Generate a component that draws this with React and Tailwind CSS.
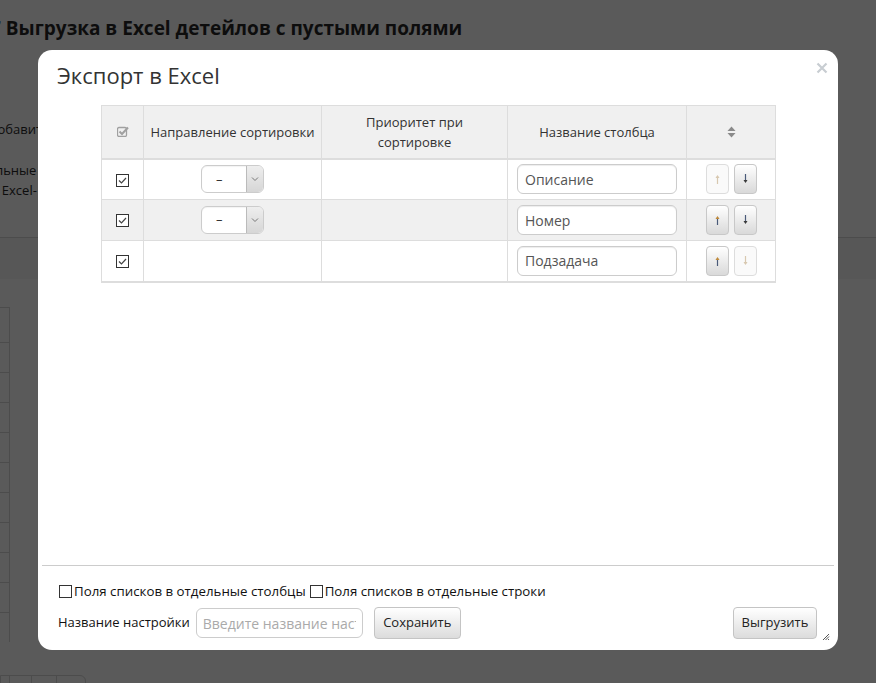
import React from 'react';

const font = { fontFamily: '"Open Sans", "DejaVu Sans", sans-serif' };

const rows = [
  { name: 'Описание', select: true, upOff: true, downOff: false },
  { name: 'Номер', select: true, upOff: false, downOff: false, striped: true },
  { name: 'Подзадача', select: false, upOff: false, downOff: true },
];

function Check({ checked }) {
  return (
    <span className="inline-flex w-[13px] h-[13px] border border-[#333] bg-white items-center justify-center align-middle">
      {checked && (
        <svg width="11" height="11" viewBox="0 0 11 11">
          <path d="M2 5.5 L4.5 8 L9 3" fill="none" stroke="#444" strokeWidth="1.2" />
        </svg>
      )}
    </span>
  );
}

function ArrowBtn({ dir, off }) {
  return (
    <button
      className={`w-[23px] h-[30px] rounded-[4px] border flex items-center justify-center ${
        off ? 'border-[#ddd] bg-[#fafafa]' : 'border-[#c8c8c8] bg-gradient-to-b from-white to-[#d9d9d9]'
      }`}
    >
      <svg width="7" height="12" viewBox="0 0 7 12">
        {dir === 'up' ? (
          <>
            <path d="M3.5 3 V11" stroke={off ? '#d8c8b0' : '#4a5a78'} strokeWidth="1.2" />
            <path d="M1.5 5 L3.5 2 L5.5 5" fill={off ? '#d8c8b0' : '#c08a3a'} />
          </>
        ) : (
          <>
            <path d="M3.5 1 V9" stroke={off ? '#d8c8b0' : '#4a5a78'} strokeWidth="1.2" />
            <path d="M1.5 7 L3.5 10 L5.5 7" fill={off ? '#d8c8b0' : '#3a3a3a'} />
          </>
        )}
      </svg>
    </button>
  );
}

function SelectBox() {
  return (
    <div className="mx-auto w-[63px] h-[28px] rounded-[6px] border border-[#ccc] bg-white flex overflow-hidden shadow-[inset_0_1px_1px_rgba(0,0,0,0.05)]">
      <div className="flex-1 flex items-center pl-[14px] text-[13px] text-[#333]">–</div>
      <div className="w-[17px] border-l border-[#bbb] bg-gradient-to-b from-[#eee] to-[#d6d6d6] flex items-center justify-center">
        <svg width="8" height="6" viewBox="0 0 8 6">
          <path d="M1 1.5 L4 4.5 L7 1.5" fill="none" stroke="#777" strokeWidth="1" />
        </svg>
      </div>
    </div>
  );
}

export default function App() {
  return (
    <div className="relative w-[876px] h-[683px] overflow-hidden bg-[#5a5a5a] text-[#0d0d0d]" style={font}>
      {/* page behind the overlay */}
      <div className="pt-[15px] -ml-[10px] text-[19px] font-bold leading-[26px] whitespace-nowrap">
        7 Выгрузка в Excel детейлов с пустыми полями
      </div>
      <div className="mt-[79px] -ml-[10px] text-[13px] leading-[18px]">добавить</div>
      <div className="mt-[22px] -ml-[33px] text-[13px] leading-[20px]">отдельные</div>
      <div className="-ml-[9px] text-[13px] leading-[20px]">в Excel-</div>
      <div className="mt-[37px] border-t border-[#4c4c4c] h-[42px] bg-[#575757]" />
      <div className="mt-[28px] w-[10px] border-r border-[#4c4c4c]">
        <div className="h-[35px] border-t border-[#4c4c4c]" />
        {Array.from({ length: 10 }).map((_, i) => (
          <div key={i} className="h-[30px] border-t border-[#4c4c4c]" />
        ))}
      </div>
      <div className="mt-[33px] flex w-[86px] h-[20px] border border-[#4c4c4c] rounded-tr-[6px]">
        <div className="w-[9px] border-r border-[#4c4c4c]" />
        <div className="w-[22px] border-r border-[#4c4c4c]" />
        <div className="w-[25px] border-r border-[#4c4c4c]" />
      </div>

      {/* modal */}
      <div className="absolute left-[38px] top-[50px] w-[800px] h-[600px] bg-white rounded-[14px] flex flex-col text-[#333]">
        <div className="relative px-[19px] pt-[11px] h-[55px]">
          <div className="text-[22px] leading-[28px] text-[#333]">Экспорт в Excel</div>
          <svg className="absolute right-[10px] top-[12px]" width="12" height="12" viewBox="0 0 12 12">
            <path d="M1.5 1.5 L10.5 10.5 M10.5 1.5 L1.5 10.5" stroke="#c8cdd2" strokeWidth="2.2" />
          </svg>
        </div>

        <div className="flex-1 px-[63px]">
          <table className="w-[675px] border-collapse text-[13px] text-[#333]">
            <thead>
              <tr className="bg-[#f0f0f0] h-[53px]">
                <th className="w-[42px] border border-[#ddd] border-b-2 font-normal">
                  <svg className="mx-auto" width="12" height="11" viewBox="0 0 12 11">
                    <rect x="0.5" y="1.5" width="9" height="9" rx="1.5" fill="none" stroke="#a0a0a0" strokeWidth="1.3" />
                    <path d="M2.5 5.5 L5 8 L11 1.5" fill="none" stroke="#a0a0a0" strokeWidth="2" />
                  </svg>
                </th>
                <th className="w-[178px] border border-[#ddd] border-b-2 font-normal leading-[20px]">Направление сортировки</th>
                <th className="w-[186px] border border-[#ddd] border-b-2 font-normal leading-[20px] px-[30px]">Приоритет при сортировке</th>
                <th className="w-[179px] border border-[#ddd] border-b-2 font-normal leading-[20px]">Название столбца</th>
                <th className="border border-[#ddd] border-b-2 font-normal">
                  <svg className="mx-auto" width="9" height="12" viewBox="0 0 9 12">
                    <path d="M0.5 5 L4.5 0.5 L8.5 5 Z" fill="#8a8a8a" />
                    <path d="M0.5 7 L4.5 11.5 L8.5 7 Z" fill="#8a8a8a" />
                  </svg>
                </th>
              </tr>
            </thead>
            <tbody>
              {rows.map((r, i) => (
                <tr key={i} className={`h-[41px] ${r.striped ? 'bg-[#f0f0f0]' : 'bg-white'}`}>
                  <td className={`border border-[#ddd] text-center ${i === 2 ? 'border-b-2' : ''}`}>
                    <Check checked />
                  </td>
                  <td className={`border border-[#ddd] ${i === 2 ? 'border-b-2' : ''}`}>{r.select && <SelectBox />}</td>
                  <td className={`border border-[#ddd] ${i === 2 ? 'border-b-2' : ''}`} />
                  <td className={`border border-[#ddd] px-[9px] ${i === 2 ? 'border-b-2' : ''}`}>
                    <div className="w-[160px] h-[30px] rounded-[6px] border border-[#ccc] bg-white flex items-center px-[7px] text-[14px] text-[#555] shadow-[inset_0_1px_1px_rgba(0,0,0,0.075)]">
                      {r.name}
                    </div>
                  </td>
                  <td className={`border border-[#ddd] ${i === 2 ? 'border-b-2' : ''}`}>
                    <div className="flex justify-center gap-[5px]">
                      <ArrowBtn dir="up" off={r.upOff} />
                      <ArrowBtn dir="down" off={r.downOff} />
                    </div>
                  </td>
                </tr>
              ))}
            </tbody>
          </table>
        </div>

        <div className="relative mx-[4px] border-t border-[#ccc] h-[85px] px-[17px] text-[13px] text-[#111]">
          <div className="mt-[16px] flex items-center leading-[18px] whitespace-nowrap text-[13.3px]">
            <Check />
            <span className="ml-[2px]">Поля списков в отдельные столбцы</span>
            <span className="ml-[4px] flex"><Check /></span>
            <span className="ml-[2px]">Поля списков в отдельные строки</span>
          </div>
          <div className="mt-[7px] flex items-center">
            <span className="-ml-[1px]">Название настройки</span>
            <input
              readOnly
              placeholder="Введите название настройки"
              className="ml-[6px] w-[167px] h-[30px] rounded-[6px] border border-[#ccc] px-[6px] text-[14px] outline-none placeholder:text-[#aaa]"
              style={font}
            />
            <button className="ml-[11px] w-[87px] h-[32px] rounded-[4px] border border-[#c4c4c4] bg-gradient-to-b from-white to-[#dcdcdc] text-[13px] text-[#222]">
              Сохранить
            </button>
            <button className="ml-auto w-[84px] h-[32px] rounded-[4px] border border-[#c4c4c4] bg-gradient-to-b from-white to-[#dcdcdc] text-[13px] text-[#222]">
              Выгрузить
            </button>
          </div>
          <svg className="absolute right-[4px] bottom-[9px]" width="8" height="8" viewBox="0 0 8 8">
            <path d="M7 1 L1 7 M7 3.5 L3.5 7 M7 6 L6 7" stroke="#555" strokeWidth="1" />
          </svg>
        </div>
      </div>
    </div>
  );
}
